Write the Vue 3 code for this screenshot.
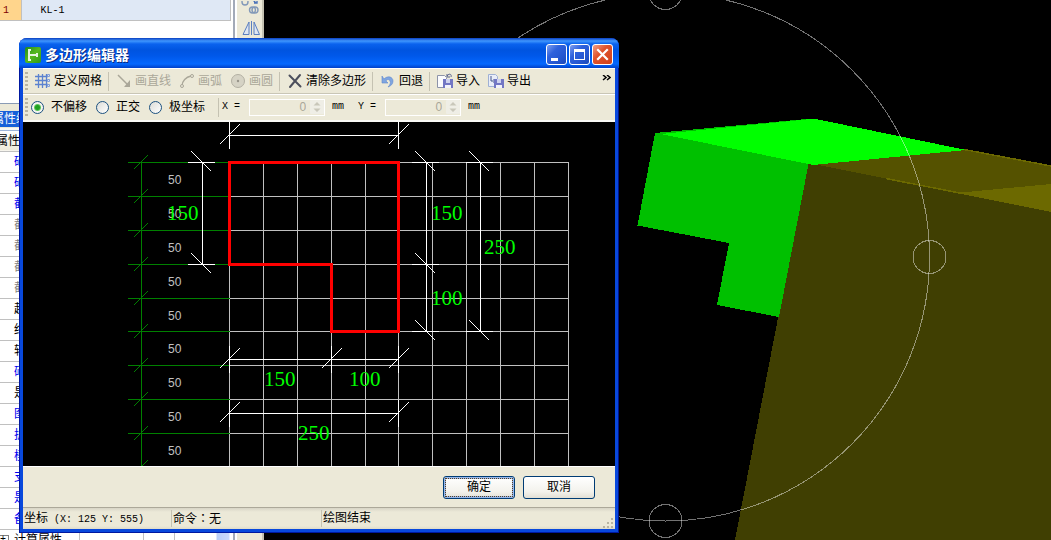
<script setup>
import { ref } from 'vue'

const mode = ref('free')
const modes = [
  { id: 'free', label: '不偏移' },
  { id: 'ortho', label: '正交' },
  { id: 'polar', label: '极坐标' }
]

const offsets = [
  { id: 'off-x', label: 'X =' },
  { id: 'off-y', label: 'Y =' }
]

const properties = [
  { name: '砼类型', tone: 'blue' },
  { name: '砼标号', tone: 'blue' },
  { name: '截面宽度', tone: 'blue' },
  { name: '截面高度', tone: 'gray' },
  { name: '截面面积', tone: 'gray' },
  { name: '截面周长', tone: 'gray' },
  { name: '截面形状', tone: 'gray' },
  { name: '起点标高', tone: 'black' },
  { name: '终点标高', tone: 'black' },
  { name: '轴线距离', tone: 'black' },
  { name: '砖胎膜', tone: 'blue' },
  { name: '是否计算', tone: 'black' },
  { name: '图元形状', tone: 'blue' },
  { name: '扩展类别', tone: 'blue' },
  { name: '模板类型', tone: 'blue' },
  { name: '支撑类型', tone: 'blue' },
  { name: '是否人防', tone: 'blue' },
  { name: '备注', tone: 'blue' },
  { name: '计算属性', tone: 'black', group: true }
]

// Section grid, 50 mm per cell
const gridX = [206, 240, 274, 308, 342, 375, 409, 443, 477, 511, 545]
const gridY = [40, 74, 108, 142, 176, 209, 243, 277, 311, 345]

// Dimension chains around the section
const hDims = [
  { y: 13, xs: [206, 375] },
  { y: 237, xs: [206, 308, 375] },
  { y: 291, xs: [206, 375] }
]
const vDims = [
  { x: 179, ys: [40, 142] },
  { x: 403, ys: [40, 142, 209] },
  { x: 457, ys: [40, 209] }
]
const dimTexts = [
  { x: 144, y: 98, t: '150' },
  { x: 408, y: 98, t: '150' },
  { x: 461, y: 132, t: '250' },
  { x: 408, y: 183, t: '100' },
  { x: 241, y: 264, t: '150' },
  { x: 326, y: 264, t: '100' },
  { x: 275, y: 318, t: '250' }
]
</script>

<template>
  <div class="desktop">
    <aside class="side">
      <table class="members">
        <tbody>
          <tr>
            <td class="num mono">1</td>
            <td class="member mono">KL-1</td>
          </tr>
        </tbody>
      </table>
      <div class="blank"></div>
      <div class="panel-title"><span>属性编辑器</span></div>
      <table class="props">
        <thead>
          <tr><th><span>属性名称</span></th><th></th><th></th><th></th></tr>
        </thead>
        <tbody>
          <tr v-for="p in properties" :key="p.name">
            <td :class="p.tone"><i v-if="p.group" class="plus">+</i>{{ p.name }}</td>
            <td></td>
            <td></td>
            <td :class="{ thumb: p.group }"></td>
          </tr>
        </tbody>
      </table>
    </aside>

    <nav class="strip">
      <svg width="20" height="40" viewBox="0 0 20 40">
        <g fill="none" stroke="#8298b8" stroke-width="1.4">
          <circle cx="5" cy="1" r="3" />
          <circle cx="12.500" cy="9" r="3" />
          <circle cx="15" cy="9" r="3" />
          <path d="M13 -1l3 3M17 -1v3h-3" stroke="#4a72b8" />
        </g>
        <path d="M9 21v12.500H3zM14 21v12.500h5.500z" fill="#dfe6f2" stroke="#5b7fc0" />
        <path d="M11.500 20v14" stroke="#5b7fc0" />
      </svg>
    </nav>

    <main class="viewer">
      <svg class="scene" viewBox="264 0 787 540" preserveAspectRatio="xMinYMin slice">
        <g shape-rendering="crispEdges">
          <path d="M808 163L1051 211V540H735z" fill="#403f02" />
          <path d="M813 164L965 149 1051 166V185L960 193z" fill="#555200" />
          <path d="M956 193L1051 184V212z" fill="#6c6900" />
          <path d="M886 178.500L962 193.500M964 149.500L1051 166" fill="none" stroke="#6c6900" stroke-width="1.500" />
          <path d="M655 133L812 118.500 808.500 164 779 317 717 305 729 243 637.500 225.500z" fill="#00c000" />
          <path d="M661 134L806 119.500 816 119 966 150 813 165z" fill="#00ff00" />
        </g>
        <g class="orbit" shape-rendering="crispEdges">
          <circle cx="665.500" cy="257" r="264" />
          <circle cx="665.500" cy="-7" r="16.500" />
          <circle cx="665.500" cy="521" r="16.500" />
          <circle cx="929.500" cy="257" r="16.500" />
        </g>
      </svg>
    </main>

    <section class="dialog" role="dialog" aria-labelledby="dlg-title">
      <header class="titlebar">
        <svg width="16" height="16" viewBox="0 0 16 16">
          <defs>
            <linearGradient id="leaf" x1="0" y1="0" x2="1" y2="1">
              <stop offset="0" stop-color="#1f8a1a" />
              <stop offset=".5" stop-color="#58b91e" />
              <stop offset="1" stop-color="#2d9a18" />
            </linearGradient>
          </defs>
          <rect width="16" height="16" rx="2" fill="url(#leaf)" />
          <path d="M4 3v10M3 3h3M3 13h3M5 8h7M12 6v4" stroke="#e7f5df" stroke-width="2" fill="none" />
        </svg>
        <h1 id="dlg-title">多边形编辑器</h1>
        <button class="win" aria-label="最小化">
          <svg width="19" height="19" viewBox="0 0 19 19"><path d="M4 13h7v3H4z" fill="#fff" /></svg>
        </button>
        <button class="win" aria-label="最大化">
          <svg width="19" height="19" viewBox="0 0 19 19"><path d="M4 4h11v11H4zM5 7v7h9V7z" fill="#fff" fill-rule="evenodd" /></svg>
        </button>
        <button class="win close" aria-label="关闭">
          <svg width="19" height="19" viewBox="0 0 19 19"><path d="M5 5l9 9M14 5l-9 9" stroke="#fff" stroke-width="2.200" stroke-linecap="square" /></svg>
        </button>
      </header>

      <div class="body">
        <div class="bar tools">
          <span class="grip"></span>
          <button class="tool">
            <svg width="16" height="16" viewBox="0 0 16 16">
              <path d="M3.500 1v14M7.500 1v14M11.500 1v14M0 3.500h13M0 7.500h13M0 11.500h13" stroke="#5b82cf" stroke-width="1.300" fill="none" />
              <path d="M12.500 1.500h2v2h-2zM12.500 6.500h2v2h-2zM12.500 11.500h2v2h-2z" fill="#dfe6f2" stroke="#7f9cd6" />
            </svg>定义网格
          </button>
          <span class="sep"></span>
          <button class="tool" disabled>
            <svg width="16" height="16" viewBox="0 0 16 16">
              <path d="M2 2l11 11" stroke="#aaa799" stroke-width="1.500" /><path d="M14 7v7H8z" fill="#aaa799" />
            </svg>画直线
          </button>
          <button class="tool" disabled>
            <svg width="16" height="16" viewBox="0 0 16 16">
              <path d="M3 13C3 8 7 4 12 3" stroke="#aaa799" stroke-width="1.300" fill="none" />
              <circle cx="3" cy="13" r="1.500" fill="#ece9d8" stroke="#aaa799" /><circle cx="13" cy="3" r="1.500" fill="#ece9d8" stroke="#aaa799" />
            </svg>画弧
          </button>
          <button class="tool" disabled>
            <svg width="16" height="16" viewBox="0 0 16 16">
              <circle cx="8" cy="8" r="6.500" fill="#d6d3c5" stroke="#b3b0a3" /><circle cx="8" cy="8" r="1.200" fill="#98958a" />
            </svg>画圆
          </button>
          <span class="sep"></span>
          <button class="tool">
            <svg width="16" height="16" viewBox="0 0 16 16">
              <path d="M2.500 2.500l11 11M13 2L3 14" stroke="#4c4f5c" stroke-width="2" stroke-linecap="round" />
            </svg>清除多边形
          </button>
          <span class="sep"></span>
          <button class="tool">
            <svg width="16" height="16" viewBox="0 0 16 16">
              <path d="M4 6c4-4 9-2 9 2 0 3-2 5-5 6 2-2 3-4 2-6-1-2-3-2-4 0l2 2-6 0V3z" fill="#7fa5e0" stroke="#5f88cc" stroke-width=".6" />
            </svg>回退
          </button>
          <span class="sep"></span>
          <button class="tool">
            <svg width="16" height="16" viewBox="0 0 16 16">
              <path d="M.500 2.500h7l2 2v10h-9z" fill="#fbfbfd" stroke="#8d93a8" />
              <path d="M10 3c2-3 5-2 4 1M10 1v3h3" stroke="#56608c" fill="none" />
              <path d="M6 6h10v9H6z" fill="#7377c4" /><path d="M9 6h4v4H9z" fill="#cfd3ee" /><path d="M8 12h6v3H8z" fill="#f2f2fa" />
            </svg>导入
          </button>
          <button class="tool">
            <svg width="16" height="16" viewBox="0 0 16 16">
              <path d="M.500 1.500h7l2 2v10h-9z" fill="#e9edf8" stroke="#9fb0d4" />
              <path d="M3 3v5h4M5.500 6l2 2-2 2" stroke="#45568c" fill="none" />
              <path d="M6 6h10v9H6z" fill="#7377c4" /><path d="M9 6h4v4H9z" fill="#cfd3ee" /><path d="M8 12h6v3H8z" fill="#f2f2fa" />
            </svg>导出
          </button>
          <button class="more" aria-label="更多">
            <svg width="9" height="6" viewBox="0 0 9 6"><path d="M1 0l3 2.500L1 5M5 0l3 2.500L5 5" stroke="#000" stroke-width="1.500" fill="none" /></svg>
          </button>
        </div>

        <div class="bar options">
          <span class="grip"></span>
          <label v-for="m in modes" :key="m.id" class="radio">
            <input v-model="mode" type="radio" name="mode" :value="m.id" />{{ m.label }}
          </label>
          <span class="sep"></span>
          <div v-for="o in offsets" :key="o.id" class="offset mono">
            <label :for="o.id">{{ o.label }}</label>
            <span class="spin">
              <input :id="o.id" type="text" value="0" disabled />
              <svg width="14" height="14" viewBox="0 0 14 14">
                <rect width="14" height="14" rx="1" fill="#efeee6" />
                <path d="M3.500 5.500L7 2l3.500 3.500zM3.500 8.500L7 12l3.500-3.500z" fill="#c9c7ba" />
              </svg>
            </span>
            <span>mm</span>
          </div>
        </div>

        <div class="canvas">
          <svg width="100%" height="100%">
            <g transform="translate(.5 .5)" fill="none" shape-rendering="crispEdges">
              <g stroke="#c0c0c0">
                <path v-for="x in gridX" :key="'x' + x" :d="`M${x} 40V400`" />
                <path v-for="y in gridY.slice(0, 9)" :key="'y' + y" :d="`M206 ${y}H545`" />
              </g>
              <g stroke="#008000">
                <path d="M118 40V400" />
                <path v-for="y in gridY" :key="'g' + y" :d="`M110 ${y + 7}l14 -14`" />
                <path v-for="y in gridY.slice(0, 9)" :key="'h' + y" :d="`M104 ${y}H206`" />
              </g>
            </g>
            <text v-for="y in gridY.slice(0, 9)" :key="'t' + y" class="cell-text" x="145" :y="y + 22">50</text>
            <g transform="translate(.5 .5)" fill="none" stroke="#fff" shape-rendering="crispEdges">
              <g v-for="d in hDims" :key="'hd' + d.y">
                <path :d="`M${d.xs[0]} ${d.y}H${d.xs[d.xs.length - 1]}`" />
                <path v-for="x in d.xs" :key="x" :d="`M${x} ${d.y - 14}v27M${x - 10} ${d.y + 9}l20 -20`" />
              </g>
              <g v-for="d in vDims" :key="'vd' + d.x">
                <path :d="`M${d.x} ${d.ys[0]}V${d.ys[d.ys.length - 1]}`" />
                <path v-for="y in d.ys" :key="y" :d="`M${d.x - 15} ${y}h27M${d.x - 11} ${y - 11}l20 20`" />
              </g>
              <path d="M206 40H375V209H308V142H206z" stroke="#f00" stroke-width="3" />
            </g>
            <text v-for="(d, i) in dimTexts" :key="i" class="dim-text" :x="d.x" :y="d.y">{{ d.t }}</text>
          </svg>
        </div>

        <footer class="actions">
          <button class="push primary"><span>确定</span></button>
          <button class="push"><span>取消</span></button>
        </footer>
        <div class="status">
          <span class="cell coords">坐标<span class="mono">&nbsp;(X: 125 Y: 555)</span></span>
          <span class="cell command">命令<span class="colon">：</span>无</span>
          <span class="cell">绘图结束</span>
          <svg class="resize" width="12" height="12" viewBox="0 0 12 12">
            <path d="M9 1h2v2H9zM5 5h2v2H5zM9 5h2v2H9zM1 9h2v2H1zM5 9h2v2H5zM9 9h2v2H9z" fill="#b8b4a2" />
          </svg>
        </div>
      </div>
    </section>
  </div>
</template>

<style>
body {
  background: #000;
  overflow: hidden;
}
</style>

<style scoped>
* {
  box-sizing: border-box;
}
.desktop {
  position: relative;
  display: grid;
  grid-template-columns: 235px 29px 1fr;
  height: 100vh;
  overflow: hidden;
  font: 12px/16px "Liberation Sans", "Noto Sans CJK SC", sans-serif;
  color: #000;
}
button,
input {
  font: inherit;
  color: inherit;
  margin: 0;
  padding: 0;
}
button {
  border: 0;
  background: none;
}
svg {
  display: block;
  flex: none;
}
.mono {
  font-family: "Liberation Mono", monospace;
  font-size: 10px;
}

/* left docked panels */
.side {
  display: flex;
  flex-direction: column;
  min-height: 0;
  overflow: hidden;
  background: #fff;
  border-right: 2px solid #a3aab8;
}
table {
  border-collapse: collapse;
  width: 100%;
  table-layout: fixed;
}
.members {
  width: 231px;
}
.members td {
  height: 20px;
  padding: 3px 0 0;
  border-right: 1px solid #c0c0c0;
  border-bottom: 1px solid #c0c0c0;
}
.members .num {
  width: 21px;
  padding-left: 3px;
  background: #ffd58c;
  color: #800000;
}
.members .member {
  padding-left: 19px;
  background: #dfe8f5;
}
.blank {
  flex: none;
  height: 83px;
  border-bottom: 1px solid #8a9bb5;
}
.panel-title {
  flex: none;
  height: 26px;
  padding-top: 7px;
  background: #ece9d8;
  border-bottom: 2px solid #f8f8f4;
}
.panel-title span {
  display: block;
  height: 16px;
  text-indent: -8px;
  background: #1660d8;
  color: #fff;
}
.props {
  flex: none;
}
.props th {
  height: 21px;
  padding: 0;
  font-weight: normal;
  text-align: left;
  background: linear-gradient(#fff, #ece9d8);
  border-top: 1px solid #9db4d8;
  border-bottom: 1px solid #c0c0c0;
}
.props th span {
  display: block;
  text-indent: -4px;
}
.props th:first-child {
  width: 79px;
}
.props th:nth-child(2) {
  width: 64px;
}
.props th:nth-child(3) {
  width: 31px;
}
.props td {
  height: 21px;
  padding: 0 0 0 14px;
  border-right: 1px solid #c0c0c0;
  border-bottom: 1px solid #c0c0c0;
  white-space: nowrap;
}
.props td:last-child {
  border-right: 0;
}
.props .thumb {
  background: linear-gradient(90deg, #fff 42px, #b8cdf8 42px, #c8d8fc 55px, #fff 55px);
}
.blue {
  color: #0000f0;
}
.gray {
  color: #808080;
}
.plus {
  float: left;
  width: 9px;
  height: 9px;
  margin: 3px 0 0 -14px;
  border: 1px solid #808080;
  border-left: 0;
  font: 10px/7px "Liberation Mono", monospace;
}
.strip {
  overflow: hidden;
  padding: 1px 3px;
  background: #ece9d8;
  border-left: 2px solid #fff;
  border-right: 2px solid #c5c2b2;
}

/* 3D view */
.viewer {
  min-width: 0;
  background: #000;
}
.scene {
  width: 100%;
  height: 100%;
}
.orbit {
  fill: none;
  stroke: #fff;
  stroke-opacity: 0.45;
}

/* dialog window */
.dialog {
  position: absolute;
  left: 19px;
  top: 38px;
  right: 432px;
  bottom: 7px;
  display: flex;
  flex-direction: column;
  padding: 0 4px 4px;
  border-radius: 8px 8px 0 0;
  background: #0848dc;
  box-shadow: inset 1px -1px 0 #0018a0, inset -1px 0 0 #00138c;
}
.titlebar {
  flex: none;
  display: flex;
  align-items: center;
  gap: 2px;
  height: 30px;
  margin: 0 -4px;
  padding: 3px 6px 0;
  border-radius: 8px 8px 0 0;
  background: linear-gradient(#0b3fc0, #3f96fe 3px, #0a62ee 6px, #0054e0 12px, #0058ea 18px, #0468fe 26px, #0040c8 30px);
}
h1 {
  flex: 1;
  margin: 0 0 0 2px;
  font-size: 14px;
  line-height: 18px;
  font-weight: bold;
  color: #fff;
  text-shadow: 1px 1px 0 #0a2a80;
}
.win {
  width: 21px;
  height: 21px;
  border: 1px solid #fff;
  border-radius: 3px;
  background: linear-gradient(135deg, #7f9ff0, #2f62dc 35%, #2456d0 70%, #1c49b8);
}
.win.close {
  background: linear-gradient(135deg, #f0a088, #e0532c 40%, #d0401a);
}
.body {
  flex: 1;
  display: flex;
  flex-direction: column;
  min-height: 0;
  background: #ece9d8;
}
.bar {
  flex: none;
  display: flex;
  align-items: center;
  border-top: 1px solid #fff;
  border-bottom: 1px solid #c9c6b6;
}
.tools {
  height: 26px;
}
.options {
  height: 28px;
  padding-bottom: 1px;
  border-bottom: 2px solid #fafaf6;
}
.grip {
  flex: none;
  width: 3px;
  height: 19px;
  margin: 0 6px 0 2px;
  background: repeating-linear-gradient(#b8b4a2 0 2px, #ece9d8 2px 4px);
}
.tool {
  display: flex;
  align-items: center;
  gap: 3px;
  padding: 0 2px 0 1px;
  margin-right: 5px;
  white-space: nowrap;
}
.tool:disabled {
  color: #aaa799;
}
.sep {
  flex: none;
  width: 1px;
  height: 19px;
  margin: 0 6px 0 -1px;
  background: #c5c2b2;
}
.more {
  align-self: flex-start;
  margin: 6px 4px 0 auto;
}
.radio {
  display: flex;
  align-items: center;
  gap: 7px;
  margin-right: 9px;
  white-space: nowrap;
}
.grip + .radio {
  margin-left: -3px;
}
.radio input {
  appearance: none;
  width: 13px;
  height: 13px;
  border: 1px solid #1c5180;
  border-radius: 50%;
  background: linear-gradient(135deg, #dcdcd7, #fff);
}
.radio input:checked {
  background: radial-gradient(circle, #21a121 0 2px, #5cc65c 3px, #f4f4f0 4px);
}
.options .sep {
  margin: 0 3px 0 4px;
}
.offset {
  display: flex;
  align-items: center;
  margin-right: 14px;
}
.spin {
  display: flex;
  align-items: center;
  width: 76px;
  height: 17px;
  margin: 0 7px 0 9px;
  border: 1px solid #fff;
  background: #ece9d8;
}
.spin input {
  flex: 1;
  width: 0;
  min-width: 0;
  padding-right: 4px;
  border: 0;
  background: transparent;
  color: #aaa799;
  font: 12px/14px "Liberation Sans", sans-serif;
  text-align: right;
}

.canvas {
  flex: 1;
  min-height: 0;
  overflow: hidden;
  background: #000;
}
.cell-text {
  font: 12px "Liberation Sans", sans-serif;
  fill: #c0c0c0;
}
.dim-text {
  font: 21px "Liberation Serif", serif;
  fill: #00ff00;
}

.actions {
  flex: none;
  display: flex;
  justify-content: flex-end;
  gap: 8px;
  padding: 9px 20px 8px;
  border-top: 1px solid #fff;
  border-bottom: 1px solid #aca899;
}
.push {
  width: 72px;
  height: 23px;
  padding: 1px;
  border: 1px solid #003c74;
  border-radius: 3px;
  background: linear-gradient(#fff, #f3f2ec 70%, #e2dfd4);
}
.push span {
  display: block;
  height: 19px;
  line-height: 17px;
  border: 1px solid transparent;
}
.primary {
  box-shadow: inset 0 0 0 2px #98b8ea;
}
.primary span {
  border: 1px dotted #5a4020;
}
.status {
  flex: none;
  display: flex;
  align-items: center;
  height: 21px;
  background: linear-gradient(#d8d5c6, #ece9d8 4px, #ece9d8 18px, #dedbc9);
}
.cell {
  height: 17px;
  padding-left: 1px;
  white-space: nowrap;
  border-right: 1px solid #c5c2b2;
}
.cell:nth-child(3) {
  border: 0;
}
.coords {
  flex: none;
  width: 149px;
}
.command {
  flex: none;
  width: 150px;
}
.colon {
  font-family: "Noto Sans CJK TC", sans-serif;
}
.resize {
  margin: 8px 1px 0 auto;
}
</style>
